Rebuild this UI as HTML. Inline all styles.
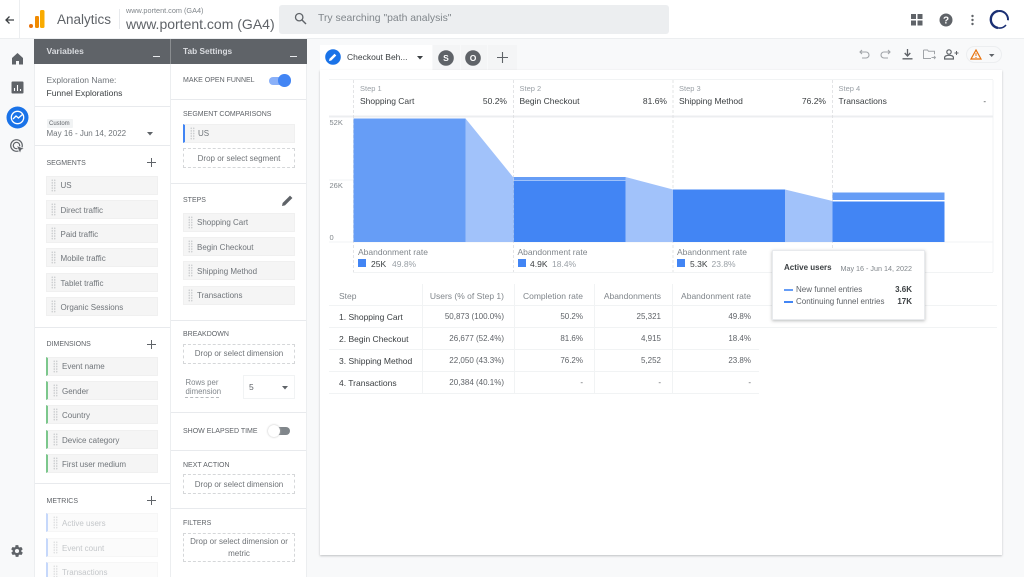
<!DOCTYPE html>
<html><head><meta charset="utf-8"><style>
html,body{margin:0;padding:0}
#r{position:relative;width:1024px;height:577px;overflow:hidden;background:#f8f9fa;font-family:"Liberation Sans",sans-serif;color:#5f6368;font-size:8.5px;filter:blur(.3px)}
#r div{position:absolute;white-space:nowrap;box-sizing:border-box}
.t{line-height:12px;transform:translateY(-6px)}
.t.s{font-size:8px;color:#70757a;transform:translateY(-5.200px)}
.h{font-size:7px;color:#5f6368;line-height:12px;transform:translateY(-5.200px)}
.c{background:#f5f5f5;border:1px solid #f0f0f0;height:19px;width:112px}
.d{border:1px dashed #d5d7d9;background:#fff;text-align:center;font-size:8px;color:#6f7377;width:112px}
.g{width:5px;height:13px;top:2px;left:4px;background-image:radial-gradient(circle,#ccced0 .7px,transparent .9px);background-size:2.5px 2.6px}
.l{background:#e8eaed;height:1px}
.r{text-align:right;font-size:8px;color:#5f6368;line-height:12px;transform:translateY(-6px)}
svg{position:absolute;overflow:visible}
</style></head><body><div id="r">

<!-- top bar -->
<div style="left:0;top:0;width:1024px;height:38.500px;background:#fff;border-bottom:1px solid #eceef0"></div>
<div style="left:19px;top:0;width:1px;height:38px;background:#eceef0"></div>
<svg style="left:4px;top:14px" width="12" height="12" viewBox="0 0 12 12"><path d="M10 6H2M5.500 2.500L2 6l3.500 3.500" fill="none" stroke="#3c4043" stroke-width="1.300"/></svg>
<svg style="left:29px;top:10px" width="16" height="19" viewBox="0 0 16 19"><circle cx="2" cy="16" r="2" fill="#e8710a"/><rect x="6" y="6" width="4" height="12" rx="1.200" fill="#f08a00"/><rect x="11" y="0" width="4.500" height="18" rx="1.500" fill="#f9ab00"/></svg>
<div class="t" style="left:57px;top:20px;font-size:13.500px;color:#5f6368;line-height:14px;transform:translateY(-7px)">Analytics</div>
<div style="left:119px;top:9px;width:1px;height:20px;background:#e8eaed"></div>
<div class="t" style="left:126px;top:10.500px;font-size:7.300px;color:#80868b">www.portent.com (GA4)</div>
<div class="t" style="left:126px;top:24px;font-size:14px;color:#5f6368;line-height:16px;transform:translateY(-8px)">www.portent.com (GA4)</div>
<div style="left:279px;top:5px;width:390px;height:29px;background:#eceef0;border-radius:3px"></div>
<svg style="left:294px;top:12px" width="13" height="13" viewBox="0 0 13 13"><circle cx="5.200" cy="5.200" r="3.700" fill="none" stroke="#5f6368" stroke-width="1.300"/><path d="M8 8l4 4" stroke="#5f6368" stroke-width="1.400"/></svg>
<div class="t" style="left:318px;top:19px;font-size:10.400px;color:#80868b">Try searching "path analysis"</div>
<svg style="left:911px;top:14px" width="12" height="12" viewBox="0 0 12 12" fill="#5f6368"><rect x="0" y="0" width="5" height="5"/><rect x="6.500" y="0" width="5" height="5"/><rect x="0" y="6.500" width="5" height="5"/><rect x="6.500" y="6.500" width="5" height="5"/></svg>
<svg style="left:939px;top:13px" width="14" height="14" viewBox="0 0 14 14"><circle cx="7" cy="7" r="6.500" fill="#5f6368"/><text x="7" y="10.500" font-size="10" font-weight="bold" text-anchor="middle" fill="#fff" font-family="Liberation Sans">?</text></svg>
<svg style="left:970px;top:14px" width="4" height="12" viewBox="0 0 4 12" fill="#5f6368"><circle cx="2.500" cy="2" r="1.200"/><circle cx="2.500" cy="6" r="1.200"/><circle cx="2.500" cy="10" r="1.200"/></svg>
<svg style="left:989px;top:9px" width="21" height="21" viewBox="0 0 21 21"><path d="M9 18.900A8.500 8.500 0 0 1 9 2.100" fill="none" stroke="#1a2f73" stroke-width="2.400"/><path d="M9 2.100A8.500 8.500 0 0 1 18.970 11.240" fill="none" stroke="#1a2f73" stroke-width="2"/><path d="M17 16A8.500 8.500 0 0 1 9 18.900" fill="none" stroke="#1a2f73" stroke-width="1.500"/></svg>

<!-- left nav -->
<svg style="left:11px;top:52px" width="13" height="13" viewBox="0 0 13 13"><path d="M6.500 1L1 6v6.500h4V9h3v3.500h4V6z" fill="#5f6368"/></svg>
<svg style="left:11px;top:81px" width="13" height="13" viewBox="0 0 13 13"><rect x=".5" y=".5" width="12" height="12" rx="1" fill="#5f6368"/><path d="M3.500 7v3M6.500 4v6M9.500 8v2" stroke="#fff" stroke-width="1.100"/></svg>
<svg style="left:6px;top:106px" width="23" height="23" viewBox="0 0 23 23"><circle cx="11.500" cy="11.500" r="11" fill="#1a73e8"/><circle cx="11.500" cy="11.500" r="6.200" fill="none" stroke="#fff" stroke-width="1.300"/><path d="M7 13l3-3 2.500 2L17 8" fill="none" stroke="#fff" stroke-width="1.300"/></svg>
<svg style="left:10px;top:139px" width="15" height="15" viewBox="0 0 15 15"><circle cx="6.500" cy="6.500" r="5.800" fill="none" stroke="#5f6368" stroke-width="1.200"/><circle cx="6.500" cy="6.500" r="3.200" fill="none" stroke="#5f6368" stroke-width="1.200"/><path d="M6.500 6.500l8 3.200-3.200 1.200-1.200 3.600z" fill="#5f6368" stroke="#f8f9fa" stroke-width=".7"/></svg>
<svg style="left:10px;top:544px" width="14" height="14" viewBox="0 0 24 24"><path fill="#5f6368" d="M19.400 13c0-.3.100-.6.100-1s0-.7-.1-1l2.100-1.600c.2-.2.200-.4.100-.6l-2-3.500c-.1-.2-.4-.3-.6-.2l-2.500 1c-.5-.4-1.100-.7-1.700-1l-.4-2.600c0-.3-.2-.5-.5-.5h-4c-.3 0-.5.200-.5.400l-.4 2.700c-.6.200-1.200.6-1.700 1l-2.500-1c-.2-.1-.5 0-.6.200l-2 3.500c-.1.200-.1.400.1.600L4.600 11c0 .3-.1.700-.1 1s0 .7.100 1l-2.100 1.600c-.2.200-.2.400-.1.600l2 3.500c.1.200.4.300.6.200l2.500-1c.5.400 1.100.7 1.700 1l.4 2.600c0 .3.200.5.500.5h4c.3 0 .5-.2.500-.4l.4-2.700c.6-.2 1.200-.6 1.700-1l2.500 1c.2.100.5 0 .6-.2l2-3.500c.1-.2.100-.4-.1-.6zM12 15.500A3.500 3.500 0 1 1 12 8.500a3.500 3.500 0 0 1 0 7z"/></svg>

<!-- panels -->
<div style="left:34px;top:39px;width:273px;height:538px;background:#fff;border-left:1px solid #eceef0;border-right:1px solid #eceef0"></div>
<div style="left:170px;top:39px;width:1px;height:538px;background:#eceef0"></div>
<div style="left:34px;top:39px;width:273px;height:24.500px;background:#5f6368"></div>
<div style="left:170px;top:39px;width:1px;height:24.500px;background:#8a8d90"></div>
<div class="t" style="left:46.500px;top:51px;font-size:8.500px;font-weight:bold;color:#dadce0">Variables</div>
<div class="t" style="left:183px;top:51px;font-size:8.300px;font-weight:bold;color:#dadce0">Tab Settings</div>
<div style="left:153px;top:55.500px;width:7px;height:1.500px;background:#e8eaed"></div>
<div style="left:290px;top:55.500px;width:7px;height:1.500px;background:#e8eaed"></div>

<!-- Variables panel -->
<div class="t" style="left:46.500px;top:80px;font-size:8.500px;color:#70757a">Exploration Name:</div>
<div class="t" style="left:46.500px;top:92.500px;font-size:8.600px;color:#3c4043">Funnel Explorations</div>
<div class="l" style="left:35px;top:105.500px;width:135px"></div>
<div style="left:47px;top:119px;width:26px;height:9px;background:#f1f3f4;border-radius:1px"></div>
<div class="t" style="left:49px;top:123.500px;font-size:6px;color:#5f6368">Custom</div>
<div class="t" style="left:46.500px;top:134px;font-size:8px;color:#70757a">May 16 - Jun 14, 2022</div>
<svg style="left:147px;top:131.500px" width="6" height="4"><path d="M0 0h6L3 3.500z" fill="#5f6368"/></svg>
<div class="l" style="left:35px;top:145px;width:135px"></div>

<div class="h" style="left:46.500px;top:162.500px">SEGMENTS</div>
<svg style="left:147px;top:158px" width="9" height="9"><path d="M4.500 0v9M0 4.500h9" stroke="#5f6368" stroke-width="1"/></svg>
<div class="c" style="left:46px;top:175.500px"><div class="g"></div></div><div class="t s" style="left:60.500px;top:185px">US</div>
<div class="c" style="left:46px;top:199.800px"><div class="g"></div></div><div class="t s" style="left:60.500px;top:209.500px">Direct traffic</div>
<div class="c" style="left:46px;top:224px"><div class="g"></div></div><div class="t s" style="left:60.500px;top:233.800px">Paid traffic</div>
<div class="c" style="left:46px;top:248.300px"><div class="g"></div></div><div class="t s" style="left:60.500px;top:258px">Mobile traffic</div>
<div class="c" style="left:46px;top:272.600px"><div class="g"></div></div><div class="t s" style="left:60.500px;top:282.500px">Tablet traffic</div>
<div class="c" style="left:46px;top:297px"><div class="g"></div></div><div class="t s" style="left:60.500px;top:307px">Organic Sessions</div>
<div class="l" style="left:35px;top:326.500px;width:135px"></div>

<div class="h" style="left:46.500px;top:344px">DIMENSIONS</div>
<svg style="left:147px;top:339.500px" width="9" height="9"><path d="M4.500 0v9M0 4.500h9" stroke="#5f6368" stroke-width="1"/></svg>
<div class="c" style="left:46px;top:356.500px;border-left:2px solid #7cc78c"><div class="g" style="left:5px"></div></div><div class="t s" style="left:62px;top:366px">Event name</div>
<div class="c" style="left:46px;top:381px;border-left:2px solid #7cc78c"><div class="g" style="left:5px"></div></div><div class="t s" style="left:62px;top:390.500px">Gender</div>
<div class="c" style="left:46px;top:405px;border-left:2px solid #7cc78c"><div class="g" style="left:5px"></div></div><div class="t s" style="left:62px;top:415px">Country</div>
<div class="c" style="left:46px;top:429.500px;border-left:2px solid #7cc78c"><div class="g" style="left:5px"></div></div><div class="t s" style="left:62px;top:439.500px">Device category</div>
<div class="c" style="left:46px;top:454px;border-left:2px solid #7cc78c"><div class="g" style="left:5px"></div></div><div class="t s" style="left:62px;top:463.800px">First user medium</div>
<div class="l" style="left:35px;top:483px;width:135px"></div>

<div class="h" style="left:46.500px;top:500.500px">METRICS</div>
<svg style="left:147px;top:496px" width="9" height="9"><path d="M4.500 0v9M0 4.500h9" stroke="#5f6368" stroke-width="1"/></svg>
<div class="c" style="left:46px;top:513px;background:#fbfbfb;border-color:#f6f6f6;border-left:2px solid #c6d8fb"><div class="g" style="left:5px;opacity:.6"></div></div><div class="t s" style="left:62px;top:523px;color:#c4c7ca">Active users</div>
<div class="c" style="left:46px;top:537.500px;background:#fbfbfb;border-color:#f6f6f6;border-left:2px solid #c6d8fb"><div class="g" style="left:5px;opacity:.6"></div></div><div class="t s" style="left:62px;top:547.500px;color:#c4c7ca">Event count</div>
<div class="c" style="left:46px;top:562px;background:#fbfbfb;border-color:#f6f6f6;border-left:2px solid #c6d8fb"><div class="g" style="left:5px;opacity:.6"></div></div><div class="t s" style="left:62px;top:571.500px;color:#c4c7ca">Transactions</div>

<!-- Tab settings panel -->
<div class="h" style="left:183px;top:80px">MAKE OPEN FUNNEL</div>
<div style="left:269px;top:76.500px;width:20px;height:8px;background:#8ab0f8;border-radius:4px"></div>
<div style="left:278px;top:74px;width:12.500px;height:12.500px;background:#4285f4;border-radius:50%"></div>
<div class="l" style="left:171px;top:99px;width:135px"></div>
<div class="h" style="left:183px;top:113.500px">SEGMENT COMPARISONS</div>
<div class="c" style="left:183px;top:123.500px;border-left:2px solid #4285f4"><div class="g" style="left:5px"></div></div><div class="t s" style="left:198px;top:133px">US</div>
<div class="d" style="left:183px;top:147.500px;height:20px;line-height:19px">Drop or select segment</div>
<div class="l" style="left:171px;top:182.500px;width:135px"></div>
<div class="h" style="left:183px;top:199.500px">STEPS</div>
<svg style="left:281px;top:193.500px" width="13" height="13" viewBox="0 0 13 13"><path d="M1 12l.6-3L9 1.600l2.400 2.400L4 11.400z" fill="#5f6368"/></svg>
<div class="c" style="left:183px;top:212.500px"><div class="g"></div></div><div class="t s" style="left:197px;top:222px">Shopping Cart</div>
<div class="c" style="left:183px;top:236.500px"><div class="g"></div></div><div class="t s" style="left:197px;top:246.500px">Begin Checkout</div>
<div class="c" style="left:183px;top:261px"><div class="g"></div></div><div class="t s" style="left:197px;top:271px">Shipping Method</div>
<div class="c" style="left:183px;top:285.500px"><div class="g"></div></div><div class="t s" style="left:197px;top:295px">Transactions</div>
<div class="l" style="left:171px;top:319.500px;width:135px"></div>
<div class="h" style="left:183px;top:334px">BREAKDOWN</div>
<div class="d" style="left:183px;top:343.500px;height:20px;line-height:18px">Drop or select dimension</div>
<div class="t" style="left:185.500px;top:383px;font-size:7.800px;color:#80868b">Rows per</div>
<div class="t" style="left:185.500px;top:391.500px;font-size:7.800px;color:#80868b">dimension</div>
<div style="left:185px;top:397px;width:34px;height:0;border-top:1px dashed #b5b8bb"></div>
<div style="left:243px;top:375px;width:52px;height:24px;background:#fff;border:1px solid #f1f3f4"></div>
<div class="t" style="left:249px;top:387px;color:#5f6368">5</div>
<svg style="left:281.500px;top:385.500px" width="6" height="4"><path d="M0 0h6L3 3.500z" fill="#5f6368"/></svg>
<div class="l" style="left:171px;top:412px;width:135px"></div>
<div class="h" style="left:183px;top:431px">SHOW ELAPSED TIME</div>
<div style="left:270px;top:427px;width:20px;height:8px;background:#80868b;border-radius:4px"></div>
<div style="left:267.500px;top:425px;width:12px;height:12px;background:#fff;border-radius:50%;box-shadow:0 0 2px #bbb"></div>
<div class="l" style="left:171px;top:450px;width:135px"></div>
<div class="h" style="left:183px;top:464.500px">NEXT ACTION</div>
<div class="d" style="left:183px;top:474px;height:20px;line-height:19px">Drop or select dimension</div>
<div class="l" style="left:171px;top:508px;width:135px"></div>
<div class="h" style="left:183px;top:523px">FILTERS</div>
<div class="d" style="left:183px;top:532.500px;height:29px;line-height:12.500px;padding-top:2px;white-space:normal">Drop or select dimension or metric</div>

<!-- tabs -->
<div style="left:320px;top:45px;width:112px;height:26px;background:#fff"></div>
<svg style="left:325px;top:49px" width="16" height="16" viewBox="0 0 16 16"><circle cx="8" cy="8" r="7.800" fill="#1a73e8"/><path d="M4 12l.5-2.300 5-5 1.800 1.800-5 5z" fill="#fff"/></svg>
<div class="t" style="left:347px;top:57px;font-size:8.500px;color:#3c4043">Checkout Beh...</div>
<svg style="left:417px;top:55.500px" width="6" height="4"><path d="M0 0h6L3 3.500z" fill="#3c4043"/></svg>
<div style="left:433px;top:45px;width:27px;height:25px;background:#f4f5f6"></div>
<div style="left:461px;top:45px;width:26px;height:25px;background:#f4f5f6"></div>
<div style="left:488px;top:45px;width:29px;height:25px;background:#f4f5f6"></div>
<svg style="left:438px;top:49.500px" width="16" height="16"><circle cx="8" cy="8" r="7.800" fill="#5f6368"/><text x="8" y="11" text-anchor="middle" font-size="8.500" font-weight="bold" fill="#fff" font-family="Liberation Sans">S</text></svg>
<svg style="left:465px;top:49.500px" width="16" height="16"><circle cx="8" cy="8" r="7.800" fill="#5f6368"/><text x="8" y="11" text-anchor="middle" font-size="8.500" font-weight="bold" fill="#fff" font-family="Liberation Sans">O</text></svg>
<svg style="left:497px;top:52px" width="11" height="11"><path d="M5.500 0v11M0 5.500h11" stroke="#5f6368" stroke-width="1.100"/></svg>

<!-- toolbar icons -->
<svg style="left:859px;top:49px" width="11" height="11" viewBox="0 0 11 11"><path d="M1 3h6a3 3 0 0 1 0 6H3M3 1L1 3l2 2" fill="none" stroke="#a0a4a8" stroke-width="1.100"/></svg>
<svg style="left:880px;top:49px" width="11" height="11" viewBox="0 0 11 11"><path d="M10 3H4a3 3 0 0 0 0 6h4M8 1l2 2-2 2" fill="none" stroke="#a0a4a8" stroke-width="1.100"/></svg>
<svg style="left:902px;top:49px" width="11" height="11" viewBox="0 0 11 11"><path d="M5.500 0v6.500M2.700 4l2.800 3 2.800-3M.5 9.800h10" fill="none" stroke="#5f6368" stroke-width="1.300"/></svg>
<svg style="left:923px;top:49px" width="13" height="11" viewBox="0 0 13 11"><path d="M.5 1h4l1 1.300h6v3M8 9.500H.5V1" fill="none" stroke="#a0a4a8" stroke-width="1"/><path d="M8.500 8.500h4M11 7l1.500 1.500L11 10" fill="none" stroke="#a0a4a8" stroke-width=".9"/></svg>
<svg style="left:944px;top:49px" width="15" height="11" viewBox="0 0 15 11"><circle cx="5" cy="3" r="2.200" fill="none" stroke="#5f6368" stroke-width="1.200"/><path d="M.6 10V8.500C.6 7 3 6.300 5 6.300s4.400.7 4.400 2.200V10z" fill="none" stroke="#5f6368" stroke-width="1.200"/><path d="M12.500 2v4M10.500 4h4" stroke="#5f6368" stroke-width="1"/></svg>
<div style="left:966px;top:46px;width:36px;height:17px;background:#f8f9fa;border:1px solid #eceef0;border-radius:9px"></div>
<svg style="left:970px;top:49px" width="12" height="11" viewBox="0 0 12 11"><path d="M6 1L1 10h10z" fill="none" stroke="#e8710a" stroke-width="1.200"/><path d="M6 4v3M6 8v1" stroke="#e8710a" stroke-width="1"/></svg>
<svg style="left:988.500px;top:53.500px" width="6" height="4"><path d="M0 0h5.500L2.700 3z" fill="#5f6368"/></svg>

<!-- card -->
<div style="left:320px;top:70px;width:682px;height:485px;background:#fff;box-shadow:0 1px 2px rgba(60,64,67,.3)"></div>

<!-- chart -->
<svg style="left:0;top:0" width="1024" height="577" viewBox="0 0 1024 577">
<path d="M329 79.500H993M329 180h24M329 242h664M353 272.500h640M993 80v192" stroke="#f1f3f4" stroke-width="1" fill="none"/>
<path d="M329 116.500h664" stroke="#eceef0" stroke-width="2" fill="none"/>
<path d="M353.500 80v192M513.500 80v192M673 80v192M832.500 80v192" stroke="#dcdee0" stroke-width=".8" stroke-dasharray="3 2" fill="none"/>
<rect x="353.500" y="118.500" width="112" height="123.500" fill="#669df6"/>
<path d="M465.500 118.500L513 177V242H465.500z" fill="#a1c2fa"/>
<rect x="513.500" y="177" width="112" height="3" fill="#669df6"/>
<rect x="513.500" y="180.500" width="112" height="61.500" fill="#4285f4"/>
<path d="M625.500 177L673 189.500V242H625.500z" fill="#a1c2fa"/>
<rect x="673" y="189.500" width="112" height="52.500" fill="#4285f4"/>
<path d="M785 189.500L832.500 201V242H785z" fill="#a1c2fa"/>
<rect x="832.500" y="192.500" width="112" height="7.500" fill="#669df6"/>
<rect x="832.500" y="201.500" width="112" height="40.500" fill="#4285f4"/>
</svg>
<div class="t" style="left:329.500px;top:123px;font-size:7.500px;color:#80868b">52K</div>
<div class="t" style="left:329.500px;top:186px;font-size:7.500px;color:#80868b">26K</div>
<div class="t" style="left:329.500px;top:238px;font-size:7.500px;color:#80868b">0</div>

<div class="t" style="left:360px;top:89px;font-size:7.500px;color:#9aa0a6">Step 1</div>
<div class="t" style="left:360px;top:101px;font-size:8.500px;color:#3c4043">Shopping Cart</div>
<div class="r" style="left:447px;width:60px;top:101px;font-size:8.500px;color:#3c4043">50.2%</div>
<div class="t" style="left:519.500px;top:89px;font-size:7.500px;color:#9aa0a6">Step 2</div>
<div class="t" style="left:519.500px;top:101px;font-size:8.500px;color:#3c4043">Begin Checkout</div>
<div class="r" style="left:607px;width:60px;top:101px;font-size:8.500px;color:#3c4043">81.6%</div>
<div class="t" style="left:679px;top:89px;font-size:7.500px;color:#9aa0a6">Step 3</div>
<div class="t" style="left:679px;top:101px;font-size:8.500px;color:#3c4043">Shipping Method</div>
<div class="r" style="left:766px;width:60px;top:101px;font-size:8.500px;color:#3c4043">76.2%</div>
<div class="t" style="left:838.500px;top:89px;font-size:7.500px;color:#9aa0a6">Step 4</div>
<div class="t" style="left:838.500px;top:101px;font-size:8.500px;color:#3c4043">Transactions</div>
<div class="r" style="left:926px;width:60px;top:102px;color:#3c4043">-</div>

<div class="t" style="left:358px;top:252px;color:#80868b">Abandonment rate</div>
<div style="left:358px;top:259px;width:8px;height:8px;background:#4285f4"></div>
<div class="t" style="left:371px;top:263.500px;color:#3c4043">25K</div>
<div class="t" style="left:392px;top:263.500px;color:#9aa0a6">49.8%</div>
<div class="t" style="left:517.500px;top:252px;color:#80868b">Abandonment rate</div>
<div style="left:518px;top:259px;width:8px;height:8px;background:#4285f4"></div>
<div class="t" style="left:530px;top:263.500px;color:#3c4043">4.9K</div>
<div class="t" style="left:552px;top:263.500px;color:#9aa0a6">18.4%</div>
<div class="t" style="left:677px;top:252px;color:#80868b">Abandonment rate</div>
<div style="left:677px;top:259px;width:8px;height:8px;background:#4285f4"></div>
<div class="t" style="left:690px;top:263.500px;color:#3c4043">5.3K</div>
<div class="t" style="left:711.500px;top:263.500px;color:#9aa0a6">23.8%</div>

<!-- table -->
<div class="l" style="left:329px;top:305px;width:668px;background:#f1f3f4"></div>
<div class="l" style="left:329px;top:327px;width:668px;background:#f1f3f4"></div>
<div class="l" style="left:329px;top:349px;width:430px;background:#f1f3f4"></div>
<div class="l" style="left:329px;top:371px;width:430px;background:#f1f3f4"></div>
<div class="l" style="left:329px;top:392.500px;width:430px;background:#f1f3f4"></div>
<div style="left:422px;top:284px;width:1px;height:109px;background:#f1f3f4"></div>
<div style="left:514px;top:284px;width:1px;height:109px;background:#f1f3f4"></div>
<div style="left:594px;top:284px;width:1px;height:109px;background:#f1f3f4"></div>
<div style="left:671.500px;top:284px;width:1px;height:109px;background:#f1f3f4"></div>

<div class="t" style="left:339px;top:295.500px;color:#80868b">Step</div>
<div class="r" style="left:404px;width:100px;top:295.500px;font-size:8.500px;color:#80868b">Users (% of Step 1)</div>
<div class="r" style="left:483px;width:100px;top:295.500px;font-size:8.500px;color:#80868b">Completion rate</div>
<div class="r" style="left:561px;width:100px;top:295.500px;font-size:8.500px;color:#80868b">Abandonments</div>
<div class="r" style="left:651px;width:100px;top:295.500px;font-size:8.500px;color:#80868b">Abandonment rate</div>

<div class="t" style="left:339px;top:317px;color:#3c4043">1. Shopping Cart</div>
<div class="r" style="left:404px;width:100px;top:317.300px">50,873 (100.0%)</div>
<div class="r" style="left:483px;width:100px;top:317.300px">50.2%</div>
<div class="r" style="left:561px;width:100px;top:317.300px">25,321</div>
<div class="r" style="left:651px;width:100px;top:317.300px">49.8%</div>

<div class="t" style="left:339px;top:339px;color:#3c4043">2. Begin Checkout</div>
<div class="r" style="left:404px;width:100px;top:339.300px">26,677 (52.4%)</div>
<div class="r" style="left:483px;width:100px;top:339.300px">81.6%</div>
<div class="r" style="left:561px;width:100px;top:339.300px">4,915</div>
<div class="r" style="left:651px;width:100px;top:339.300px">18.4%</div>

<div class="t" style="left:339px;top:361px;color:#3c4043">3. Shipping Method</div>
<div class="r" style="left:404px;width:100px;top:361.300px">22,050 (43.3%)</div>
<div class="r" style="left:483px;width:100px;top:361.300px">76.2%</div>
<div class="r" style="left:561px;width:100px;top:361.300px">5,252</div>
<div class="r" style="left:651px;width:100px;top:361.300px">23.8%</div>

<div class="t" style="left:339px;top:382.500px;color:#3c4043">4. Transactions</div>
<div class="r" style="left:404px;width:100px;top:383px">20,384 (40.1%)</div>
<div class="r" style="left:483px;width:100px;top:383px">-</div>
<div class="r" style="left:561px;width:100px;top:383px">-</div>
<div class="r" style="left:651px;width:100px;top:383px">-</div>

<!-- tooltip -->
<div style="left:771.500px;top:249.500px;width:153px;height:70px;background:#fff;border:1px solid #e8eaed;box-shadow:0 1px 3px rgba(60,64,67,.35)"></div>
<div class="t" style="left:784px;top:268px;font-size:8px;font-weight:bold;color:#3c4043">Active users</div>
<div class="r" style="left:812px;width:100px;top:268.500px;font-size:7.200px;color:#80868b">May 16 - Jun 14, 2022</div>
<div style="left:784px;top:288.500px;width:8.500px;height:2px;background:#669df6"></div>
<div style="left:784px;top:300.500px;width:8.500px;height:2px;background:#4285f4"></div>
<div class="t" style="left:796px;top:289.800px;font-size:8px;color:#5f6368">New funnel entries</div>
<div class="t" style="left:796px;top:301.800px;font-size:8px;color:#5f6368">Continuing funnel entries</div>
<div class="r" style="left:852px;width:60px;top:289.800px;font-weight:bold;color:#3c4043">3.6K</div>
<div class="r" style="left:852px;width:60px;top:301.800px;font-weight:bold;color:#3c4043">17K</div>

</div></body></html>
